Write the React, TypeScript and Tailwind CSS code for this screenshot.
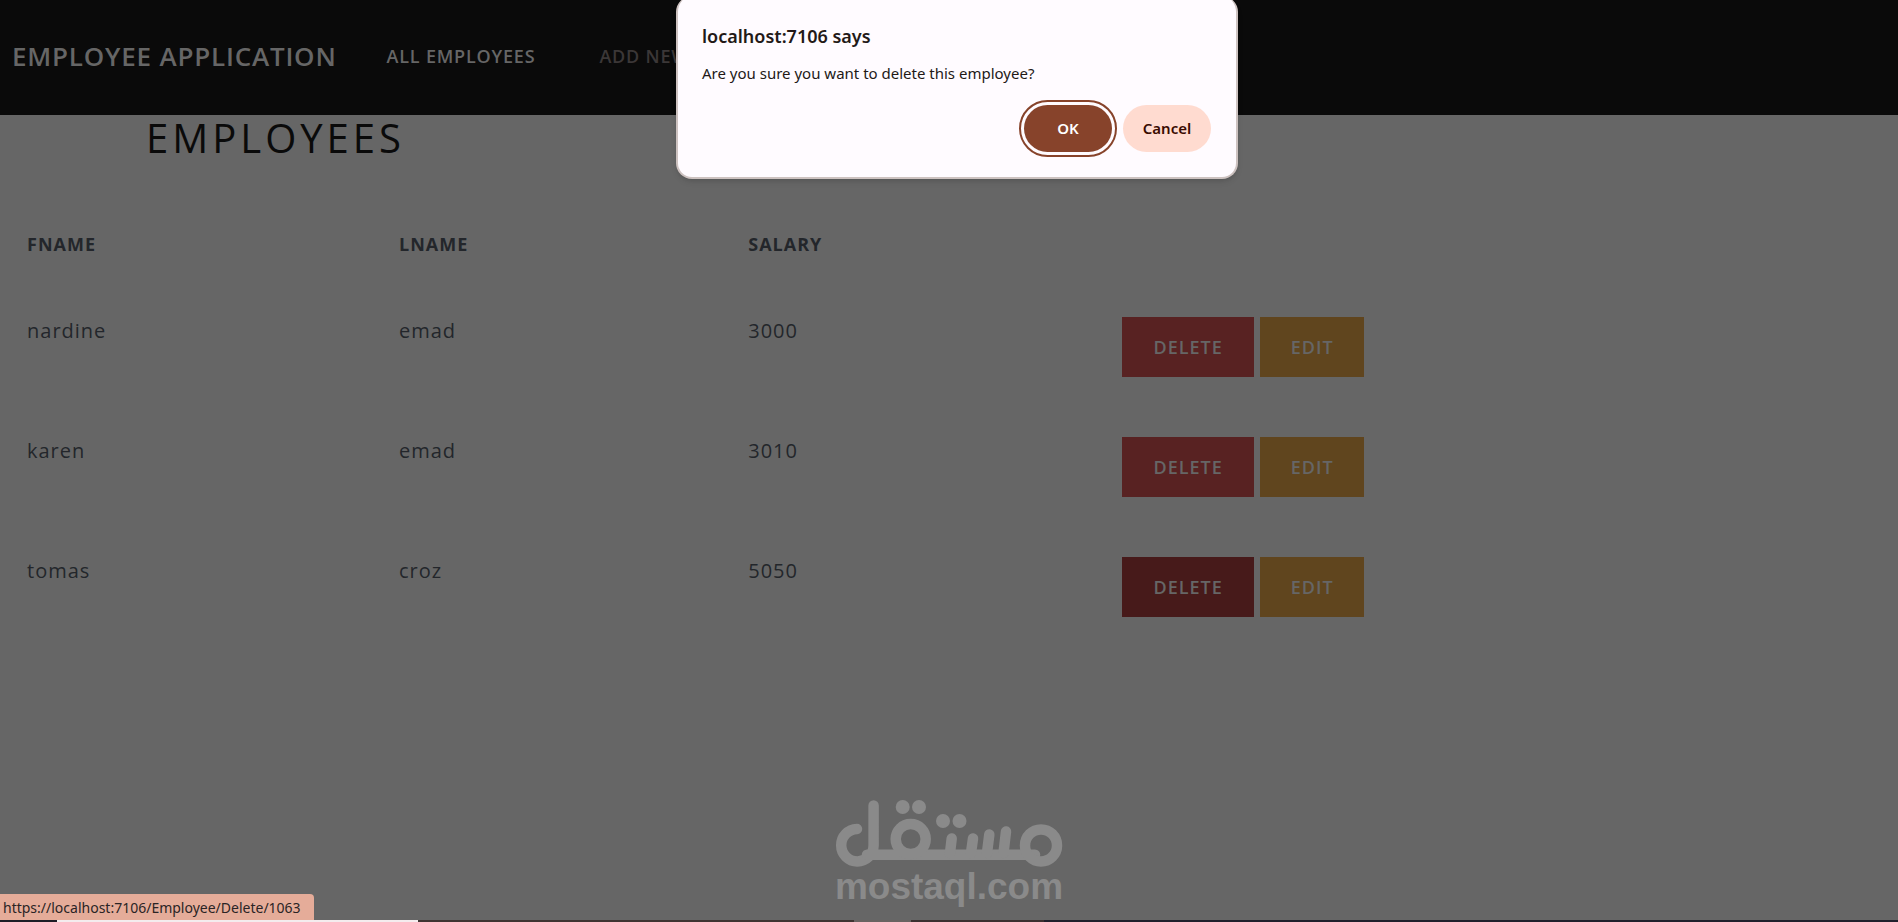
const EMPLOYEES = [
  { id: 1061, fname: "nardine", lname: "emad", salary: 3000 },
  { id: 1062, fname: "karen", lname: "emad", salary: 3010 },
  { id: 1063, fname: "tomas", lname: "croz", salary: 5050 },
];

const ACTIVE_ID = 1063;

function Navbar() {
  return (
    <header className="flex h-[115px] items-center bg-[#0a0a0a] px-3 pb-0.5 font-semibold uppercase tracking-wider">
      <a href="#" className="mr-[50px] text-[26px] text-[#666666]">Employee Application</a>
      <nav className="flex gap-16 text-[18px]">
        <a href="#" className="text-[#666666]">All Employees</a>
        <a href="#" className="text-[#3b3737]">Add New</a>
      </nav>
    </header>
  );
}

function EmployeeTable() {
  return (
    <table className="mt-[39px] w-full table-fixed text-left text-[20px] leading-7 tracking-wider text-[#23262b]">
      <colgroup>
        <col className="w-[19.6%]" />
        <col className="w-[18.4%]" />
        <col className="w-[19.7%]" />
        <col />
      </colgroup>
      <thead>
        <tr className="text-[18px] leading-7 uppercase">
          <th className="py-[30px] pl-[27px] font-bold">Fname</th>
          <th className="py-[30px] pl-[27px] font-bold">Lname</th>
          <th className="py-[30px] pl-[27px] font-bold">Salary</th>
          <th />
        </tr>
      </thead>
      <tbody>
        {EMPLOYEES.map((e) => (
          <tr key={e.id} className="align-top">
            <td className="py-[29px] pl-[27px]">{e.fname}</td>
            <td className="py-[29px] pl-[27px]">{e.lname}</td>
            <td className="py-[29px] pl-[27px]">{e.salary}</td>
            <td className="pt-[29px] pb-[31px] pl-[27px]">
              <div className="flex gap-[6px] text-[18px] font-semibold text-[#666666]">
                <a
                  href={`#delete-${e.id}`}
                  className={`flex h-[60px] w-[132px] items-center justify-center ${e.id === ACTIVE_ID ? "bg-[#471a1a]" : "bg-[#582222]"}`}
                >
                  DELETE
                </a>
                <a href={`#edit-${e.id}`} className="flex h-[60px] w-[104px] items-center justify-center bg-[#60451e]">
                  EDIT
                </a>
              </div>
            </td>
          </tr>
        ))}
      </tbody>
    </table>
  );
}

function ConfirmDialog() {
  return (
    <div className="absolute inset-x-0 -top-1 flex justify-center pl-4 font-['Noto_Sans',sans-serif]">
      <div
        role="dialog"
        aria-labelledby="confirm-title"
        className="w-[562px] rounded-2xl border-2 border-t-0 border-[#cdc2c0] bg-[#fffbff] pt-7 pr-[25px] pb-[25px] pl-6 text-[#231917] shadow-md"
      >
        <h2 id="confirm-title" className="text-[18px] leading-6 font-semibold">localhost:7106 says</h2>
        <p className="mt-[13px] text-[15px] leading-6">Are you sure you want to delete this employee?</p>
        <div className="mt-5 flex justify-end gap-[11px] text-[15px] font-semibold">
          <button className="h-[47px] w-[88px] rounded-full bg-[#87432b] text-white outline-2 outline-offset-3 outline-[#87432b]">OK</button>
          <button className="h-[47px] w-[88px] rounded-full bg-[#ffdbd0] text-[#3a0b01]">Cancel</button>
        </div>
      </div>
    </div>
  );
}

function Watermark() {
  return (
    <div className="absolute inset-x-0 bottom-4 flex flex-col items-center text-[#8a8a8a]">
      <svg width="228" height="68" viewBox="0 0 228 68" fill="none" stroke="currentColor" strokeWidth="10.5" strokeLinecap="round" aria-hidden="true">
        <path d="M22 29A16.2 16.2 0 1 0 38.6 45.5V5.5" />
        <path d="M32 54.7H200" />
        <circle cx="75.7" cy="39" r="15" />
        <circle cx="206" cy="45.4" r="16" />
        <path d="M116.7 38.5L115 53M138 38.5L136 53M154.3 34.5L152 53M171 31.5L168.5 53" />
        <g fill="currentColor" stroke="none">
          <circle cx="67.7" cy="7" r="7" />
          <circle cx="84" cy="7" r="7" />
          <circle cx="108" cy="21" r="7" />
          <circle cx="124.5" cy="21" r="7" />
        </g>
      </svg>
      <div className="font-['Liberation_Sans',sans-serif] text-[37px] leading-[38px] font-bold">mostaql.com</div>
    </div>
  );
}

function StatusBar() {
  return (
    <div className="absolute inset-x-0 bottom-0 font-['Noto_Sans',sans-serif]">
      <div className="flex h-[26px] w-[314px] items-center rounded-tr bg-[#e5ac99] pl-[3px] text-[14px] text-[#2a2425]">
        https://localhost:7106/Employee/Delete/1063
      </div>
      {/* top edge of the taskbar */}
      <div className="flex h-[2px]">
        <div className="w-[3%] bg-[#1e1b26]" />
        <div className="w-[19%] bg-[#f4ecee]" />
        <div className="w-[23%] bg-[#3f3432]" />
        <div className="w-[3%] bg-[#696361]" />
        <div className="w-[7%] bg-[#3b3030]" />
        <div className="flex-1 bg-[#20202c]" />
      </div>
    </div>
  );
}

export default function App() {
  return (
    <div className="relative min-h-screen bg-[#666666] font-['Open_Sans',sans-serif]">
      <Navbar />
      <main>
        <h1 className="pl-[146px] text-[40px] leading-[46px] tracking-widest text-[#0a0a0a] uppercase">Employees</h1>
        <EmployeeTable />
      </main>
      <Watermark />
      <StatusBar />
      <ConfirmDialog />
    </div>
  );
}
